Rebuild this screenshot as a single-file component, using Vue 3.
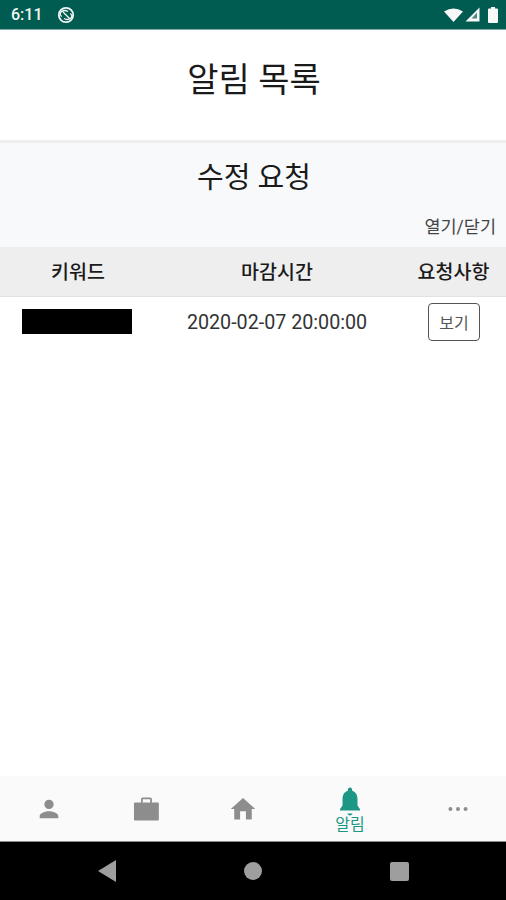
<template>
  <div class="screen">
    <div class="status-bar">
      <span class="clock">6:11</span>
      <svg class="dnd" width="18" height="18" viewBox="0 0 18 18">
        <circle cx="9" cy="9" r="7.2" fill="none" stroke="#f2f7f6" stroke-width="1.800" />
        <path d="M4.800 10.500 A4.500 3.200 0 0 1 11 5.500 M7 12.500 A4.500 3.200 0 0 0 13.200 7.500 M6 6 L12.500 12.500" fill="none" stroke="#f2f7f6" stroke-width="1.300" />
      </svg>
      <span class="status-gap"></span>
      <svg width="19" height="14" viewBox="0 0 19 14"><path d="M0 3.500 Q9.500 -2.500 19 3.500 L9.500 14 Z" fill="#f6f9f8" /></svg>
      <svg class="signal" width="15" height="15" viewBox="0 0 15 15">
        <path d="M14.500 .5 V14.500 H.5 Z" fill="#f6f9f8" />
        <path d="M12 5.500 V11.500 H6.500 Z" fill="#4d8c83" />
      </svg>
      <svg class="battery" width="10" height="16" viewBox="0 0 10 16">
        <path d="M3 0 H7 V1.500 H9 A1 1 0 0 1 10 2.500 V15 A1 1 0 0 1 9 16 H1 A1 1 0 0 1 0 15 V2.500 A1 1 0 0 1 1 1.500 H3 Z" fill="#f6f9f8" />
      </svg>
    </div>

    <header class="page-head">
      <h1>알림 목록</h1>
    </header>

    <section class="request-head">
      <h2>수정 요청</h2>
      <div class="toggle">열기/닫기</div>
    </section>

    <div class="table-row table-title">
      <div>키워드</div>
      <div>마감시간</div>
      <div class="title-last">요청사항</div>
    </div>
    <div class="table-row table-item">
      <div class="cell"><span class="redacted"></span></div>
      <div class="cell">2020-02-07 20:00:00</div>
      <div class="cell"><button class="view-btn">보기</button></div>
    </div>

    <div class="spacer"></div>

    <nav class="tabs">
      <div v-for="tab in tabs" :key="tab.name" class="tab" :class="{ active: tab.active }">
        <svg :width="tab.size" :height="tab.size" viewBox="0 0 24 24">
          <path :d="tab.icon" fill="currentColor" />
        </svg>
        <span v-if="tab.active" class="tab-label">{{ tab.name }}</span>
      </div>
    </nav>

    <div class="system-nav">
      <svg width="18" height="22" viewBox="0 0 18 22"><path d="M18 0 V22 L0 11 Z" fill="#9e9e9e" /></svg>
      <span class="sys-circle"></span>
      <span class="sys-square"></span>
    </div>
  </div>
</template>

<script setup>
const tabs = [
  {
    name: '내 정보',
    size: 28,
    icon: 'M12 12a4 4 0 1 0 0-8 4 4 0 0 0 0 8zm0 2c-3 0-8 1.500-8 4v1.500c0 .3.200.5.500.5h15c.3 0 .5-.2.5-.5V18c0-2.500-5-4-8-4z'
  },
  {
    name: '업무',
    size: 28,
    icon: 'M7.700 6.400V3.600c0-.8.700-1.500 1.500-1.500h6.400c.8 0 1.500.7 1.500 1.500v2.800H22c.6 0 1 .4 1 1v13.500c0 .6-.4 1-1 1H2.700c-.6 0-1-.4-1-1V7.400c0-.6.400-1 1-1zm1.500 0h6.400V3.600H9.200z'
  },
  {
    name: '홈',
    size: 28,
    icon: 'M9.500 21v-7h5v7h5v-9h3L12 2.500 1.500 12h3v9z'
  },
  {
    name: '알림',
    size: 30,
    active: true,
    icon: 'M12 23.500c1.100 0 2-.6 2-1.500h-4c0 .9.900 1.500 2 1.500zM18 15.500v-5c0-3.300-1.500-6-4.300-6.800V3a1.700 1.700 0 1 0-3.400 0v.7C7.500 4.500 6 7.200 6 10.500v5L4 18.500v1h16v-1l-2-3z'
  },
  {
    name: '더보기',
    size: 28,
    icon: 'M5.500 10.300a1.700 1.700 0 1 0 0 3.400 1.700 1.700 0 0 0 0-3.400zm6.500 0a1.700 1.700 0 1 0 0 3.400 1.700 1.700 0 0 0 0-3.400zm6.500 0a1.700 1.700 0 1 0 0 3.400 1.700 1.700 0 0 0 0-3.400z'
  }
]
</script>

<style scoped>
.screen {
  width: 506px;
  height: 900px;
  display: flex;
  flex-direction: column;
  overflow: hidden;
  background: #fff;
  color: #1a1a1a;
  font-family: Roboto, "Noto Sans CJK KR", sans-serif;
}
.status-bar {
  height: 30px;
  flex: none;
  box-sizing: border-box;
  display: flex;
  align-items: center;
  padding: 0 8px 0 11px;
  background: #005c50;
  border-bottom: 1px solid #7fa9a3;
  color: #f2f7f6;
}
.clock {
  font-size: 16px;
  font-weight: 500;
}
.dnd {
  margin-left: 14px;
}
.status-gap {
  flex: 1;
}
.signal {
  margin-left: 2px;
}
.battery {
  margin-left: 8px;
}
.page-head {
  height: 113px;
  flex: none;
  display: flex;
  justify-content: center;
  padding: 27px 0 0 2px;
  box-sizing: border-box;
  border-bottom: 3px solid #eee;
}
h1 {
  margin: 0;
  font-size: 34px;
  line-height: 46px;
  font-weight: 400;
}
.request-head {
  height: 104px;
  flex: none;
  box-sizing: border-box;
  padding-top: 14px;
  background: #f8f9fb;
}
h2 {
  margin: 0;
  padding-left: 2px;
  font-size: 29px;
  line-height: 42px;
  font-weight: 400;
  text-align: center;
}
.toggle {
  margin-top: 16px;
  padding-right: 10px;
  font-size: 17.500px;
  line-height: 24px;
  text-align: right;
  color: #444;
}
.table-row {
  display: grid;
  grid-template-columns: 156px 242px 108px;
  flex: none;
}
.table-title {
  height: 50px;
  padding-bottom: 3px;
  box-sizing: border-box;
  align-items: center;
  background: #eee;
  border-bottom: 1px solid #e2e2e2;
  font-size: 19.500px;
  font-weight: 500;
  text-align: center;
  color: #1a1a1a;
}
.title-last {
  padding-left: 3px;
}
.table-item {
  height: 50px;
  padding-top: 6px;
  align-items: start;
  font-size: 19.700px;
}
.cell {
  height: 38px;
  display: flex;
  align-items: center;
  justify-content: center;
  color: #333;
}
.redacted {
  width: 110px;
  height: 25px;
  background: #000;
  margin: -2px 2px 0 0;
}
.view-btn {
  width: 52px;
  height: 38px;
  padding: 0;
  margin-left: 4px;
  background: #fff;
  border: 1px solid #555;
  border-radius: 4px;
  font-family: inherit;
  font-size: 16px;
  color: #555;
}
.spacer {
  flex: 1;
}
.tabs {
  height: 66px;
  flex: none;
  display: grid;
  grid-template-columns: 97px 97px 97px 118px 97px;
  box-sizing: border-box;
  background: #fafafa;
  border-bottom: 1px solid #8a8a8a;
}
.tab {
  display: flex;
  flex-direction: column;
  align-items: center;
  justify-content: center;
  color: #8d8d8d;
}
.tab.active {
  color: #1c9685;
  padding-top: 3px;
}
.tab-label {
  margin-top: -1px;
  font-size: 16px;
  line-height: 20px;
}
.system-nav {
  height: 58px;
  flex: none;
  display: grid;
  grid-template-columns: repeat(3, 146px);
  align-items: center;
  justify-items: center;
  padding-left: 34px;
  background: #000;
}
.sys-circle {
  width: 18px;
  height: 18px;
  border-radius: 50%;
  background: #9e9e9e;
}
.sys-square {
  width: 19px;
  height: 19px;
  border-radius: 2px;
  background: #9e9e9e;
}
</style>
<style>
body {
  margin: 0;
}
</style>
